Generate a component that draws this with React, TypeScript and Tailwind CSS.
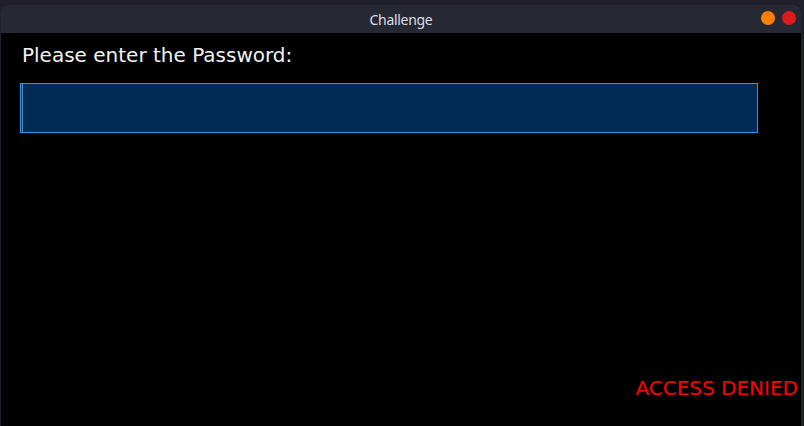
export default function App() {
  return (
    <div className="w-[804px] h-[426px] bg-[#1f2029] overflow-hidden flex flex-col pt-[5px]">
      <div className="flex-1 ml-[1px] mr-[3px] flex flex-col rounded-t-[6px] overflow-hidden bg-black">
        {/* title bar */}
        <div className="h-[28px] bg-[#262833] flex items-center relative">
          <div
            className="flex-1 text-center text-[14px] tracking-[-0.3px] text-[#dcdee4]"
            style={{ fontFamily: '"Noto Sans", "Open Sans", sans-serif' }}
          >
            Challenge
          </div>
          <div className="absolute right-[5px] top-[6px] flex gap-[7px]">
            <span className="w-[14px] h-[14px] rounded-full bg-[#ff7f00]" />
            <span className="w-[14px] h-[14px] rounded-full bg-[#dc1c1c]" />
          </div>
        </div>

        {/* content */}
        <div
          className="flex-1 flex flex-col pl-[19px] pr-[43px]"
          style={{ fontFamily: '"DejaVu Sans", sans-serif' }}
        >
          <div className="text-[20px] leading-[24px] text-[#f2f2f2] mt-[10px] pl-[2px]">
            Please enter the Password:
          </div>
          <div className="mt-[16px] h-[50px] border border-[#1e9ff5] bg-[#002b57] flex">
            <span className="w-[1px] ml-[1px] bg-[#6d8aa8]" />
          </div>
          <div className="flex-1" />
          <div className="self-end -mr-[40px] mb-[26px] text-[20px] leading-[24px] text-[#ff0000]">
            ACCESS DENIED
          </div>
        </div>
      </div>
    </div>
  );
}
